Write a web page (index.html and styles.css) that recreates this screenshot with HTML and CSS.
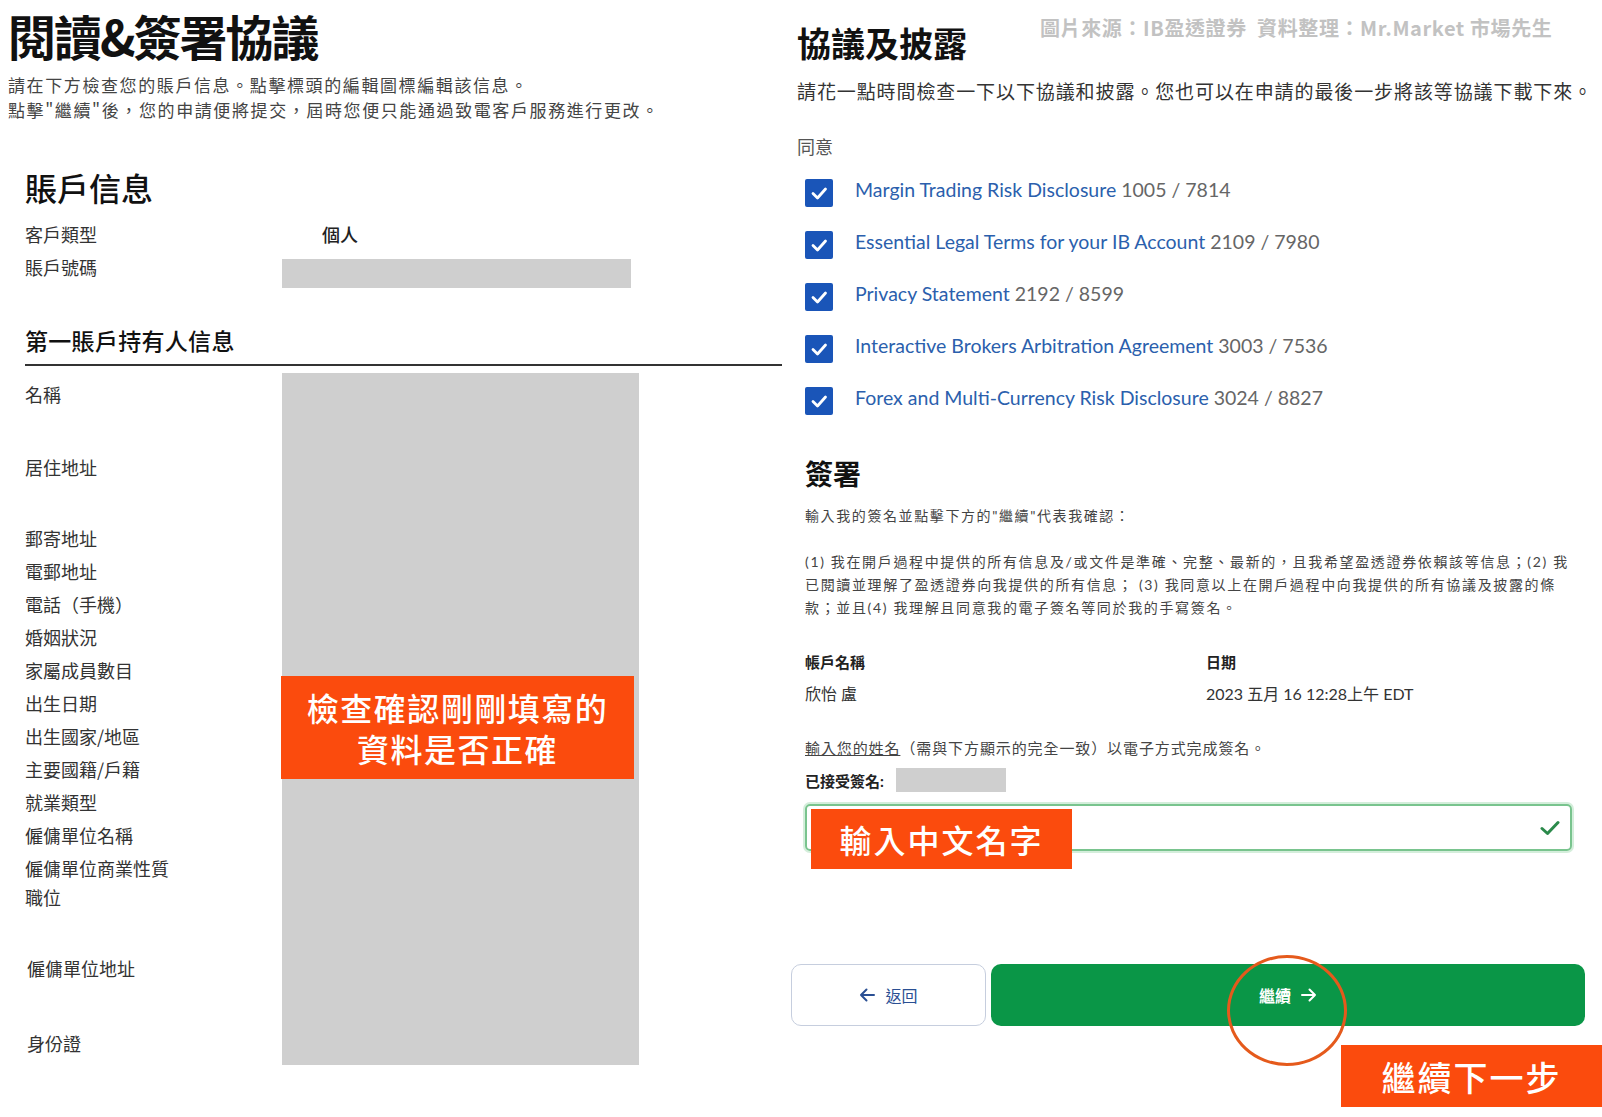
FILE: index.html
```html
<!DOCTYPE html>
<html lang="zh-Hant">
<head>
    <meta charset="UTF-8">
    <meta name="viewport" content="width=device-width, initial-scale=1.0">
    <title>閱讀&amp;簽署協議</title>
    <link rel="stylesheet" href="styles.css">
</head>
<body>
    <div class="page">
        <!-- Left: account review -->
        <div class="review">
            <h1 class="title">閱讀&amp;簽署協議</h1>
            <p class="subtitle">請在下方檢查您的賬戶信息。點擊標頭的編輯圖標編輯該信息。<br>點擊"繼續"後，您的申請便將提交，屆時您便只能通過致電客戶服務進行更改。</p>

            <div class="section">
                <h2 class="section-title">賬戶信息</h2>
                <div class="kv-row">
                    <div class="kv-label">客戶類型</div>
                    <div class="kv-value">個人</div>
                </div>
                <div class="kv-row">
                    <div class="kv-label">賬戶號碼</div>
                    <div class="redacted short"></div>
                </div>

                <h3 class="holder-title">第一賬戶持有人信息</h3>
                <div class="holder">
                    <div class="labels">
                        <div class="label tall">名稱</div>
                        <div class="label tall2">居住地址</div>
                        <div class="label">郵寄地址</div>
                        <div class="label">電郵地址</div>
                        <div class="label">電話（手機）</div>
                        <div class="label">婚姻狀況</div>
                        <div class="label">家屬成員數目</div>
                        <div class="label">出生日期</div>
                        <div class="label">出生國家/地區</div>
                        <div class="label">主要國籍/戶籍</div>
                        <div class="label">就業類型</div>
                        <div class="label">僱傭單位名稱</div>
                        <div class="label snug">僱傭單位商業性質</div>
                        <div class="label tall2">職位</div>
                        <div class="label tall3 shifted">僱傭單位地址</div>
                        <div class="label shifted">身份證</div>
                    </div>
                    <div class="redacted big">
                        <div class="note note-check">檢查確認剛剛填寫的<br>資料是否正確</div>
                    </div>
                </div>
            </div>
        </div>

        <!-- Right: agreements and signature -->
        <div class="agree">
            <div class="agree-head">
                <h1 class="agree-title">協議及披露</h1>
                <div class="credit">圖片來源：IB盈透證券&nbsp;&nbsp;資料整理：Mr.Market 市場先生</div>
            </div>
            <p class="agree-desc">請花一點時間檢查一下以下協議和披露。您也可以在申請的最後一步將該等協議下載下來。</p>
            <div class="consent-label">同意</div>

            <ul class="docs">
                <li class="doc">
                    <span class="box"><svg width="28" height="28" viewBox="0 0 28 28"><path d="M8 14.5 L12.5 19 L20.5 10" fill="none" stroke="#fff" stroke-width="2.8" stroke-linecap="round" stroke-linejoin="round"/></svg></span>
                    <span class="doc-text"><a class="doc-link">Margin Trading Risk Disclosure</a> <span class="doc-num">1005 / 7814</span></span>
                </li>
                <li class="doc">
                    <span class="box"><svg width="28" height="28" viewBox="0 0 28 28"><path d="M8 14.5 L12.5 19 L20.5 10" fill="none" stroke="#fff" stroke-width="2.8" stroke-linecap="round" stroke-linejoin="round"/></svg></span>
                    <span class="doc-text"><a class="doc-link">Essential Legal Terms for your IB Account</a> <span class="doc-num">2109 / 7980</span></span>
                </li>
                <li class="doc">
                    <span class="box"><svg width="28" height="28" viewBox="0 0 28 28"><path d="M8 14.5 L12.5 19 L20.5 10" fill="none" stroke="#fff" stroke-width="2.8" stroke-linecap="round" stroke-linejoin="round"/></svg></span>
                    <span class="doc-text"><a class="doc-link">Privacy Statement</a> <span class="doc-num">2192 / 8599</span></span>
                </li>
                <li class="doc">
                    <span class="box"><svg width="28" height="28" viewBox="0 0 28 28"><path d="M8 14.5 L12.5 19 L20.5 10" fill="none" stroke="#fff" stroke-width="2.8" stroke-linecap="round" stroke-linejoin="round"/></svg></span>
                    <span class="doc-text"><a class="doc-link">Interactive Brokers Arbitration Agreement</a> <span class="doc-num">3003 / 7536</span></span>
                </li>
                <li class="doc">
                    <span class="box"><svg width="28" height="28" viewBox="0 0 28 28"><path d="M8 14.5 L12.5 19 L20.5 10" fill="none" stroke="#fff" stroke-width="2.8" stroke-linecap="round" stroke-linejoin="round"/></svg></span>
                    <span class="doc-text"><a class="doc-link">Forex and Multi-Currency Risk Disclosure</a> <span class="doc-num">3024 / 8827</span></span>
                </li>
            </ul>

            <div class="sign">
                <h2 class="sign-title">簽署</h2>
                <p class="sign-intro">輸入我的簽名並點擊下方的"繼續"代表我確認：</p>
                <p class="sign-terms">(1) 我在開戶過程中提供的所有信息及/或文件是準確、完整、最新的，且我希望盈透證券依賴該等信息；(2) 我<br>已閱讀並理解了盈透證券向我提供的所有信息； (3) 我同意以上在開戶過程中向我提供的所有協議及披露的條<br>款；並且(4) 我理解且同意我的電子簽名等同於我的手寫簽名。</p>

                <div class="meta">
                    <div class="meta-col">
                        <div class="meta-key">帳戶名稱</div>
                        <div class="meta-val">欣怡 盧</div>
                    </div>
                    <div class="meta-col">
                        <div class="meta-key">日期</div>
                        <div class="meta-val">2023 五月 16 12:28上午 EDT</div>
                    </div>
                </div>

                <p class="sign-hint"><u>輸入您的姓名</u>（需與下方顯示的完全一致）以電子方式完成簽名。</p>
                <div class="accepted">已接受簽名: <span class="redacted tiny"></span></div>

                <div class="sign-input">
                    <svg class="ok" width="20" height="16" viewBox="0 0 20 16"><path d="M2 8.5 L7.5 13.5 L18 2.5" fill="none" stroke="#2b8a4b" stroke-width="3" stroke-linecap="round" stroke-linejoin="round"/></svg>
                    <div class="note note-name">輸入中文名字</div>
                </div>
            </div>

            <div class="actions">
                <button class="btn btn-back">
                    <svg width="16" height="14" viewBox="0 0 16 14"><path d="M15 7 H2 M7.5 1.5 L2 7 L7.5 12.5" fill="none" stroke="#2a4f93" stroke-width="2" stroke-linecap="round" stroke-linejoin="round"/></svg>
                    返回
                </button>
                <button class="btn btn-next">
                    繼續
                    <svg width="16" height="14" viewBox="0 0 16 14"><path d="M1 7 H14 M8.5 1.5 L14 7 L8.5 12.5" fill="none" stroke="#fff" stroke-width="2" stroke-linecap="round" stroke-linejoin="round"/></svg>
                </button>
                <div class="ring"></div>
                <div class="note note-next">繼續下一步</div>
            </div>
        </div>
    </div>
</body>
</html>
```

FILE: styles.css
```css
body {
    margin: 0;
    background: #fff;
    font-family: "Noto Sans CJK TC", "Noto Sans", sans-serif;
    color: #333;
}

.page {
    display: flex;
    width: 1602px;
    height: 1117px;
    overflow: hidden;
}

/* ---------- left column ---------- */

.review {
    width: 790px;
    flex: none;
}

.title {
    margin: 6px 0 0 8px;
    font-size: 48px;
    line-height: 58px;
    letter-spacing: -2px;
    font-weight: 700;
    color: #111;
}

.subtitle {
    margin: 8px 0 0 8px;
    font-size: 17px;
    line-height: 25px;
    letter-spacing: 1.6px;
    color: #444;
}

.section {
    margin-left: 25px;
    width: 757px;
}

.section-title {
    margin: 45px 0 0;
    font-size: 32px;
    line-height: 40px;
    font-weight: 500;
    color: #111;
}

.kv-row {
    display: flex;
    height: 33px;
    align-items: center;
}

.kv-row:first-of-type {
    margin-top: 10px;
}

.kv-label {
    width: 257px;
    font-size: 18px;
    color: #333;
}

.kv-value {
    margin-left: 40px;
    font-size: 18px;
    font-weight: 500;
    color: #222;
}

.redacted {
    background: #cfcfcf;
}

.redacted.short {
    width: 349px;
    height: 29px;
    margin-top: 14px;
}

.holder-title {
    margin: 42px 0 0;
    padding-bottom: 9px;
    border-bottom: 2px solid #333;
    font-size: 23px;
    line-height: 30px;
    letter-spacing: 0.3px;
    font-weight: 500;
    color: #111;
}

.holder {
    display: flex;
    margin-top: 7px;
}

.labels {
    width: 257px;
    padding-top: 5px;
}

.label {
    height: 33px;
    line-height: 33px;
    font-size: 18px;
    color: #333;
}

.label.tall { height: 73px; }
.label.tall2 { height: 71px; }
.label.tall3 { height: 75px; }
.label.snug { height: 29px; }
.label.shifted { padding-left: 2px; }

.redacted.big {
    position: relative;
    width: 357px;
    height: 692px;
}

/* ---------- annotation overlays ---------- */

.note {
    position: absolute;
    background: #fb4b0d;
    color: #fff;
    font-weight: 500;
    display: flex;
    align-items: center;
    justify-content: center;
    text-align: center;
}

.note-check {
    left: -1px;
    top: 303px;
    width: 353px;
    height: 103px;
    font-size: 32px;
    line-height: 41px;
    letter-spacing: 1.5px;
}

.note-name {
    left: 4px;
    top: 3px;
    width: 261px;
    height: 60px;
    font-size: 32px;
    letter-spacing: 2px;
}

.note-next {
    left: 550px;
    top: 81px;
    width: 261px;
    height: 62px;
    font-size: 34px;
    letter-spacing: 2px;
}

.ring {
    position: absolute;
    left: 436px;
    top: -9px;
    width: 114px;
    height: 105px;
    border: 3px solid #e55a1c;
    border-radius: 50%;
}

/* ---------- right column ---------- */

.agree {
    flex: 1;
    font-family: Lato, "Noto Sans CJK TC", sans-serif;
}

.agree-head {
    position: relative;
    margin: 21px 0 0 7px;
}

.agree-title {
    margin: 0;
    font-family: "Noto Sans CJK TC", sans-serif;
    font-size: 34px;
    line-height: 44px;
    font-weight: 700;
    color: #111;
}

.credit {
    position: absolute;
    left: 243px;
    top: -8px;
    font-family: "Noto Sans CJK TC", sans-serif;
    font-size: 20px;
    line-height: 30px;
    letter-spacing: 0.6px;
    font-weight: 700;
    color: #c2c2c2;
    white-space: nowrap;
}

.agree-desc {
    margin: 12px 0 0 7px;
    font-family: "Noto Sans CJK TC", sans-serif;
    font-size: 19px;
    line-height: 28px;
    letter-spacing: 0.9px;
    color: #333;
    white-space: nowrap;
}

.consent-label {
    margin: 29px 0 0 7px;
    font-family: "Noto Sans CJK TC", sans-serif;
    font-size: 18px;
    line-height: 24px;
    color: #555;
}

.docs {
    list-style: none;
    margin: 9px 0 0 15px;
    padding: 0;
}

.doc {
    display: flex;
    align-items: center;
    height: 52px;
    font-size: 19.5px;
}

.box {
    width: 28px;
    height: 28px;
    margin-right: 22px;
    background: #1a55b8;
    border-radius: 2px;
    display: flex;
}

.doc-text {
    line-height: 24px;
    margin-bottom: 6px;
    white-space: nowrap;
}

.doc-link {
    color: #2b5fad;
}

.doc-num {
    color: #666;
}

.sign {
    margin-left: 15px;
    width: 767px;
}

.sign-title {
    margin: 28px 0 0;
    font-family: "Noto Sans CJK TC", sans-serif;
    font-size: 28px;
    line-height: 36px;
    font-weight: 700;
    color: #111;
}

.sign-intro {
    margin: 14px 0 0;
    font-size: 14px;
    line-height: 22px;
    letter-spacing: 1.6px;
    color: #444;
}

.sign-terms {
    margin: 23px 0 0;
    font-size: 14px;
    line-height: 23px;
    letter-spacing: 1.65px;
    color: #444;
    white-space: nowrap;
}

.meta {
    display: flex;
    margin-top: 31px;
}

.meta-col:first-child {
    width: 401px;
    flex: none;
}

.meta-key {
    font-size: 15px;
    line-height: 24px;
    font-weight: 700;
    color: #222;
}

.meta-val {
    margin-top: 8px;
    font-size: 16px;
    line-height: 24px;
    color: #333;
}

.sign-hint {
    margin: 30px 0 0;
    font-size: 15px;
    line-height: 24px;
    letter-spacing: 0.9px;
    color: #444;
}

.accepted {
    display: flex;
    align-items: center;
    height: 24px;
    margin-top: 8px;
    font-size: 15px;
    font-weight: 700;
    color: #222;
}

.redacted.tiny {
    display: inline-block;
    width: 110px;
    height: 24px;
    margin-left: 12px;
}

.sign-input {
    position: relative;
    margin-top: 12px;
    height: 43px;
    border: 2px solid #79c48e;
    border-radius: 5px;
    box-shadow: 0 0 0 2px #d4eedb;
    display: flex;
    align-items: center;
    justify-content: flex-end;
    padding-right: 10px;
}

.actions {
    position: relative;
    display: flex;
    gap: 5px;
    margin: 113px 0 0 1px;
}

.btn {
    height: 62px;
    border-radius: 10px;
    font-family: "Noto Sans CJK TC", sans-serif;
    font-size: 16px;
    display: flex;
    align-items: center;
    justify-content: center;
    gap: 10px;
}

.btn-back {
    width: 195px;
    background: #fff;
    border: 1.5px solid #c6cede;
    color: #2a4f93;
}

.btn-next {
    width: 594px;
    background: #0a9647;
    border: none;
    color: #fff;
    font-weight: 700;
    font-size: 16px;
}
```
